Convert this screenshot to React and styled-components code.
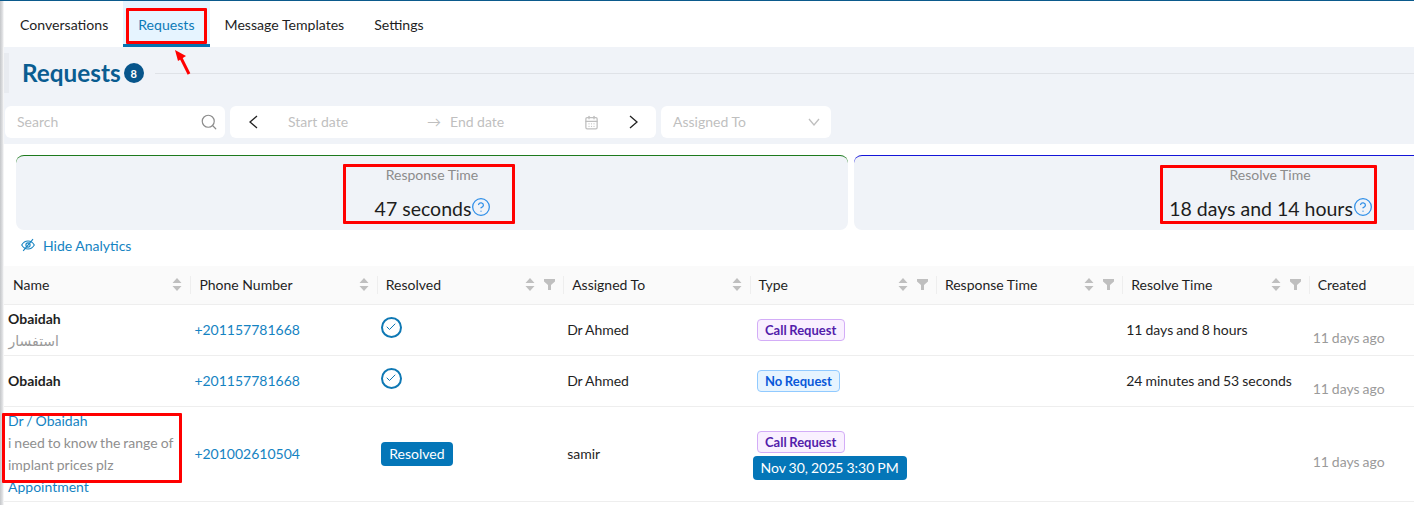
import React from "react";
import styled, { createGlobalStyle } from "styled-components";
import { Search, CalendarDays, Check, HelpCircle } from "lucide-react";

const Global = createGlobalStyle`
  html, body { margin: 0; padding: 0; background: #fff; }
  body { font-family: Lato, "Noto Sans", sans-serif; font-size: 14px; color: #1c1c1c; }
`;

const Page = styled.div`
  position: relative;
  width: 1414px;
  height: 505px;
  overflow: hidden;
  border-top: 1px solid #0b5a8c;
  box-sizing: border-box;
  padding-left: 4px;
  background: #fff;
  &::before {
    content: "";
    position: absolute;
    left: 0; top: 0; bottom: 0;
    width: 4px;
    background: linear-gradient(90deg, #c4c6c9, #e4e5e7 70%, #fff);
    z-index: 2;
  }
`;
const TabBar = styled.nav`
  display: flex;
  height: 46px;
  padding-left: 1px;
`;
const Tab = styled.div`
  box-sizing: border-box;
  padding: 4px 15px 0;
  display: flex;
  align-items: center;
  height: 46px;
  line-height: 42px;
  font-size: 14.100px;
  color: ${p => (p.$active ? "#0d7ab8" : "#1f1f1f")};
  background: ${p => (p.$active ? "#e6f4ff" : "transparent")};
  border-bottom: 3px solid ${p => (p.$active ? "#0673b1" : "transparent")};
`;
const Head = styled.section`
  background: #f0f3f8;
  height: 97px;
`;
const TitleRow = styled.div`
  display: flex;
  align-items: center;
  height: 40px;
  padding-top: 6px;
`;
const TitleBar = styled.div`
  width: 5px;
  height: 40px;
  background: #e8ebf0;
  margin-right: 13px;
`;
const Title = styled.h1`
  margin: 0;
  font-size: 24.300px;
  font-weight: 700;
  color: #0a5d91;
  line-height: 40px;
`;
const Count = styled.span`
  width: 20px;
  height: 20px;
  border-radius: 50%;
  background: #07558b;
  color: #fff;
  font-size: 11px;
  font-weight: 700;
  display: flex;
  align-items: center;
  justify-content: center;
  margin-left: 3px;
`;
const Rule = styled.div`
  flex: 1;
  height: 1px;
  background: #dfe2e7;
  margin-left: 11px;
`;
const Filters = styled.div`
  display: flex;
  gap: 5px;
  margin-top: 13px;
  padding-left: 1px;
`;
const Field = styled.div`
  box-sizing: border-box;
  height: 32px;
  width: ${p => p.$w}px;
  background: #fff;
  border-radius: 6px;
  display: flex;
  align-items: center;
  padding: ${p => p.$pad || "0 7px 0 12px"};
  color: #bfbfbf;
  font-size: 14px;
`;
const Grow = styled.span`
  flex: 1;
`;
const DateText = styled.span`
  width: ${p => p.$w}px;
  margin-left: ${p => p.$ml || 0}px;
  padding-bottom: 2px;
`;
const Holder = styled.span`
  padding-bottom: 2px;
`;
const ArrowGlyph = styled.span`
  width: 23px;
  padding-bottom: 2px;
`;
const Cards = styled.div`
  display: flex;
  gap: 6px;
  margin-top: 11px;
  margin-left: 12px;
  width: 1700px;
`;
const Card = styled.div`
  box-sizing: border-box;
  width: 832px;
  height: 75px;
  background: #f0f3f8;
  border-top: 1px solid ${p => p.$line};
  border-radius: 8px;
  text-align: center;
  padding-top: 11px;
`;
const CardLabel = styled.div`
  font-size: 14px;
  line-height: 16px;
  color: #8c8c8c;
`;
const CardValue = styled.div`
  display: flex;
  align-items: center;
  justify-content: center;
  margin-top: 13px;
  font-size: 19.500px;
  line-height: 26px;
  color: #1d1d1d;
`;
const HintIcon = styled(HelpCircle)`
  color: #2f8fe8;
  margin: -4px -2px 0 0;
`;
const ToggleRow = styled.div`
  display: flex;
  align-items: center;
  gap: 8px;
  height: 36px;
  padding: 0 0 6px 17px;
  box-sizing: border-box;
  color: #1583c2;
  font-size: 14px;
`;
const Table = styled.table`
  border-collapse: collapse;
  table-layout: fixed;
  width: 1491px;
`;
const Th = styled.th`
  position: relative;
  height: 38px;
  padding: 0 8px 0 9px;
  box-sizing: border-box;
  background: #fafafa;
  border-bottom: 1px solid #eeeeee;
  font-weight: 400;
  font-size: 14px;
  text-align: left;
  color: #1f1f1f;
  &:not(:first-child)::before {
    content: "";
    position: absolute;
    left: 0; top: 10px; bottom: 10px;
    width: 1px;
    background: #eeeeee;
  }
`;
const ThInner = styled.div`
  display: flex;
  align-items: center;
`;
const Td = styled.td`
  padding: 0 4px;
  border-bottom: 1px solid #eeeeee;
  height: ${p => p.$h}px;
  vertical-align: middle;
  font-size: 14px;
  line-height: 22px;
  word-spacing: -0.600px;
  color: #1f1f1f;
`;
const Strong = styled.div`
  font-weight: 700;
  font-size: 14px;
  margin-top: ${p => p.$top || 0}px;
`;
const Arabic = styled.div`
  color: #9a9a9a;
  direction: rtl;
  text-align: right;
  width: 51px;
  font-size: 14px;
  font-family: "DejaVu Sans", sans-serif;
`;
const LinkText = styled.div`
  color: #1583c2;
  font-size: 14px;
`;
const Muted = styled.div`
  color: #8f8f8f;
  font-size: 14px;
`;
const Time = styled.div`
  color: #9a9a9a;
  padding-top: ${p => p.$pad}px;
`;
const CheckCircle = styled.span`
  display: flex;
  align-items: center;
  justify-content: center;
  box-sizing: border-box;
  width: 21px;
  height: 21px;
  border: 2px solid #0e78b4;
  border-radius: 50%;
  color: #0e78b4;
  margin-top: -5px;
`;
const ResolvedPill = styled.span`
  display: inline-block;
  background: #0476b8;
  color: #fff;
  border-radius: 4px;
  padding: 0 8.500px;
  height: 24px;
  line-height: 24px;
  font-size: 14px;
`;
const Tag = styled.span`
  display: inline-block;
  box-sizing: border-box;
  height: 22px;
  line-height: 20px;
  padding: 0 7.500px;
  border-radius: 4px;
  font-size: 13px;
  font-weight: 700;
  margin: -2px 0 0 3px;
  color: ${p => p.$c};
  background: ${p => p.$bg};
  border: 1px solid ${p => p.$b};
`;
const DateChip = styled.div`
  display: inline-block;
  background: #0476b8;
  color: #fff;
  border-radius: 4px;
  height: 24px;
  line-height: 24px;
  padding: 0 8px;
  margin-left: -1px;
  font-size: 14px;
`;
const TypeStack = styled.div`
  display: flex;
  flex-direction: column;
  align-items: flex-start;
  gap: 3px;
  padding-top: 6px;
`;
const SortWrap = styled.svg`
  margin-left: auto;
  flex: none;
`;
const FilterWrap = styled.svg`
  margin-left: 9px;
  flex: none;
`;
const Mark = styled.div`
  position: absolute;
  z-index: 3;
  box-sizing: border-box;
  border: 3px solid #ff0000;
  border-radius: 1px;
  left: ${p => p.$x}px;
  top: ${p => p.$y}px;
  width: ${p => p.$w}px;
  height: ${p => p.$h}px;
`;
const Arrow = styled.svg`
  position: absolute;
  left: 170px;
  top: 46px;
`;

const Sort = () => (
  <SortWrap width="10" height="15" viewBox="0 0 10 15"><path d="M5 1l4.500 5h-9zM5 14l4.500-5h-9z" fill="#bfbfbf" /></SortWrap>
);
const Funnel = () => (
  <FilterWrap width="11" height="11" viewBox="0 0 11 11"><path d="M0 0h11v2.500L7 6v5H4V6L0 2.500z" fill="#bfbfbf" /></FilterWrap>
);
const Chevron = ({ d, w = 10, h = 14, color = "#222" }) => (
  <svg width={w} height={h} viewBox={`0 0 ${w} ${h}`} fill="none"><path d={d} stroke={color} strokeWidth="1.300" /></svg>
);
const EyeSlash = () => (
  <svg width="14" height="14" viewBox="0 0 14 14" fill="none" stroke="currentColor" strokeWidth="1.100">
    <path d="M.7 7S3 3 7 3s6.300 4 6.300 4-2.300 4-6.300 4S.7 7 .7 7z" />
    <circle cx="7" cy="7" r="2.100" />
    <path d="M2.200 12.800L12 1.200" />
  </svg>
);
const Header = ({ label, filter }) => (
  <Th>
    <ThInner>
      {label}
      <Sort />
      {filter && <Funnel />}
    </ThInner>
  </Th>
);

const CallTag = () => <Tag $c="#531dab" $bg="#f9f0ff" $b="#d3adf7">Call Request</Tag>;

export default function App() {
  return (
    <Page>
      <Global />
      <TabBar>
        <Tab>Conversations</Tab>
        <Tab $active>Requests</Tab>
        <Tab>Message Templates</Tab>
        <Tab>Settings</Tab>
      </TabBar>
      <Head>
        <TitleRow>
          <TitleBar />
          <Title>Requests</Title>
          <Count>8</Count>
          <Rule />
        </TitleRow>
        <Filters>
          <Field $w={220}><Holder>Search</Holder><Grow /><Search size={18} color="#8c8c8c" strokeWidth={1.6} /></Field>
          <Field $w={426} $pad="0 17px 0 18px">
            <Chevron d="M9 1L2 7l7 6" />
            <DateText $w={139} $ml={30}>Start date</DateText>
            <ArrowGlyph>→</ArrowGlyph>
            <DateText $w={134}>End date</DateText>
            <CalendarDays size={15} color="#bfbfbf" />
            <Grow />
            <Chevron d="M1 1l7 6-7 6" />
          </Field>
          <Field $w={170} $pad="0 11px 0 12px"><Holder>Assigned To</Holder><Grow /><Chevron w={12} h={8} d="M1 1l5 6 5-6" color="#bfbfbf" /></Field>
        </Filters>
      </Head>
      <Cards>
        <Card $line="#1d7a1d">
          <CardLabel>Response Time</CardLabel>
          <CardValue>47 seconds<HintIcon size={20} strokeWidth={1.5} /></CardValue>
        </Card>
        <Card $line="#1414d8">
          <CardLabel>Resolve Time</CardLabel>
          <CardValue>18 days and 14 hours<HintIcon size={20} strokeWidth={1.5} /></CardValue>
        </Card>
      </Cards>
      <ToggleRow><EyeSlash />Hide Analytics</ToggleRow>
      <Table>
        <thead>
          <tr>
            <Header label="Name" />
            <Header label="Phone Number" />
            <Header label="Resolved" filter />
            <Header label="Assigned To" />
            <Header label="Type" filter />
            <Header label="Response Time" filter />
            <Header label="Resolve Time" filter />
            <Header label="Created" />
          </tr>
        </thead>
        <tbody>
          <tr>
            <Td $h={50}><Strong $top={1}>Obaidah</Strong><Arabic>استفسار</Arabic></Td>
            <Td $h={50}><LinkText>+201157781668</LinkText></Td>
            <Td $h={50}><CheckCircle><Check size={12} strokeWidth={2} /></CheckCircle></Td>
            <Td $h={50}>Dr Ahmed</Td>
            <Td $h={50}><CallTag /></Td>
            <Td $h={50} />
            <Td $h={50}>11 days and 8 hours</Td>
            <Td $h={50}><Time $pad={16}>11 days ago</Time></Td>
          </tr>
          <tr>
            <Td $h={50}><Strong>Obaidah</Strong></Td>
            <Td $h={50}><LinkText>+201157781668</LinkText></Td>
            <Td $h={50}><CheckCircle><Check size={12} strokeWidth={2} /></CheckCircle></Td>
            <Td $h={50}>Dr Ahmed</Td>
            <Td $h={50}><Tag $c="#0958d9" $bg="#e6f4ff" $b="#91caff">No Request</Tag></Td>
            <Td $h={50} />
            <Td $h={50}>24 minutes and 53 seconds</Td>
            <Td $h={50}><Time $pad={16}>11 days ago</Time></Td>
          </tr>
          <tr>
            <Td $h={94}>
              <LinkText>Dr / Obaidah</LinkText>
              <Muted>i need to know the range of<br />implant prices plz</Muted>
              <LinkText>Appointment</LinkText>
            </Td>
            <Td $h={94}><LinkText>+201002610504</LinkText></Td>
            <Td $h={94}><ResolvedPill>Resolved</ResolvedPill></Td>
            <Td $h={94}>samir</Td>
            <Td $h={94}>
              <TypeStack>
                <CallTag />
                <DateChip>Nov 30, 2025 3:30 PM</DateChip>
              </TypeStack>
            </Td>
            <Td $h={94} />
            <Td $h={94} />
            <Td $h={94}><Time $pad={16}>11 days ago</Time></Td>
          </tr>
        </tbody>
      </Table>
      <Mark $x={126} $y={7} $w={81} $h={36} />
      <Mark $x={343} $y={163} $w={172} $h={60} />
      <Mark $x={1160} $y={164} $w={217} $h={59} />
      <Mark $x={2} $y={412} $w={180} $h={70} />
      <Arrow width="24" height="32" viewBox="0 0 24 32">
        <path d="M19 27L11 11" stroke="#f00" strokeWidth="3" />
        <path d="M5 3l11 6-8 5z" fill="#f00" />
      </Arrow>
    </Page>
  );
}
